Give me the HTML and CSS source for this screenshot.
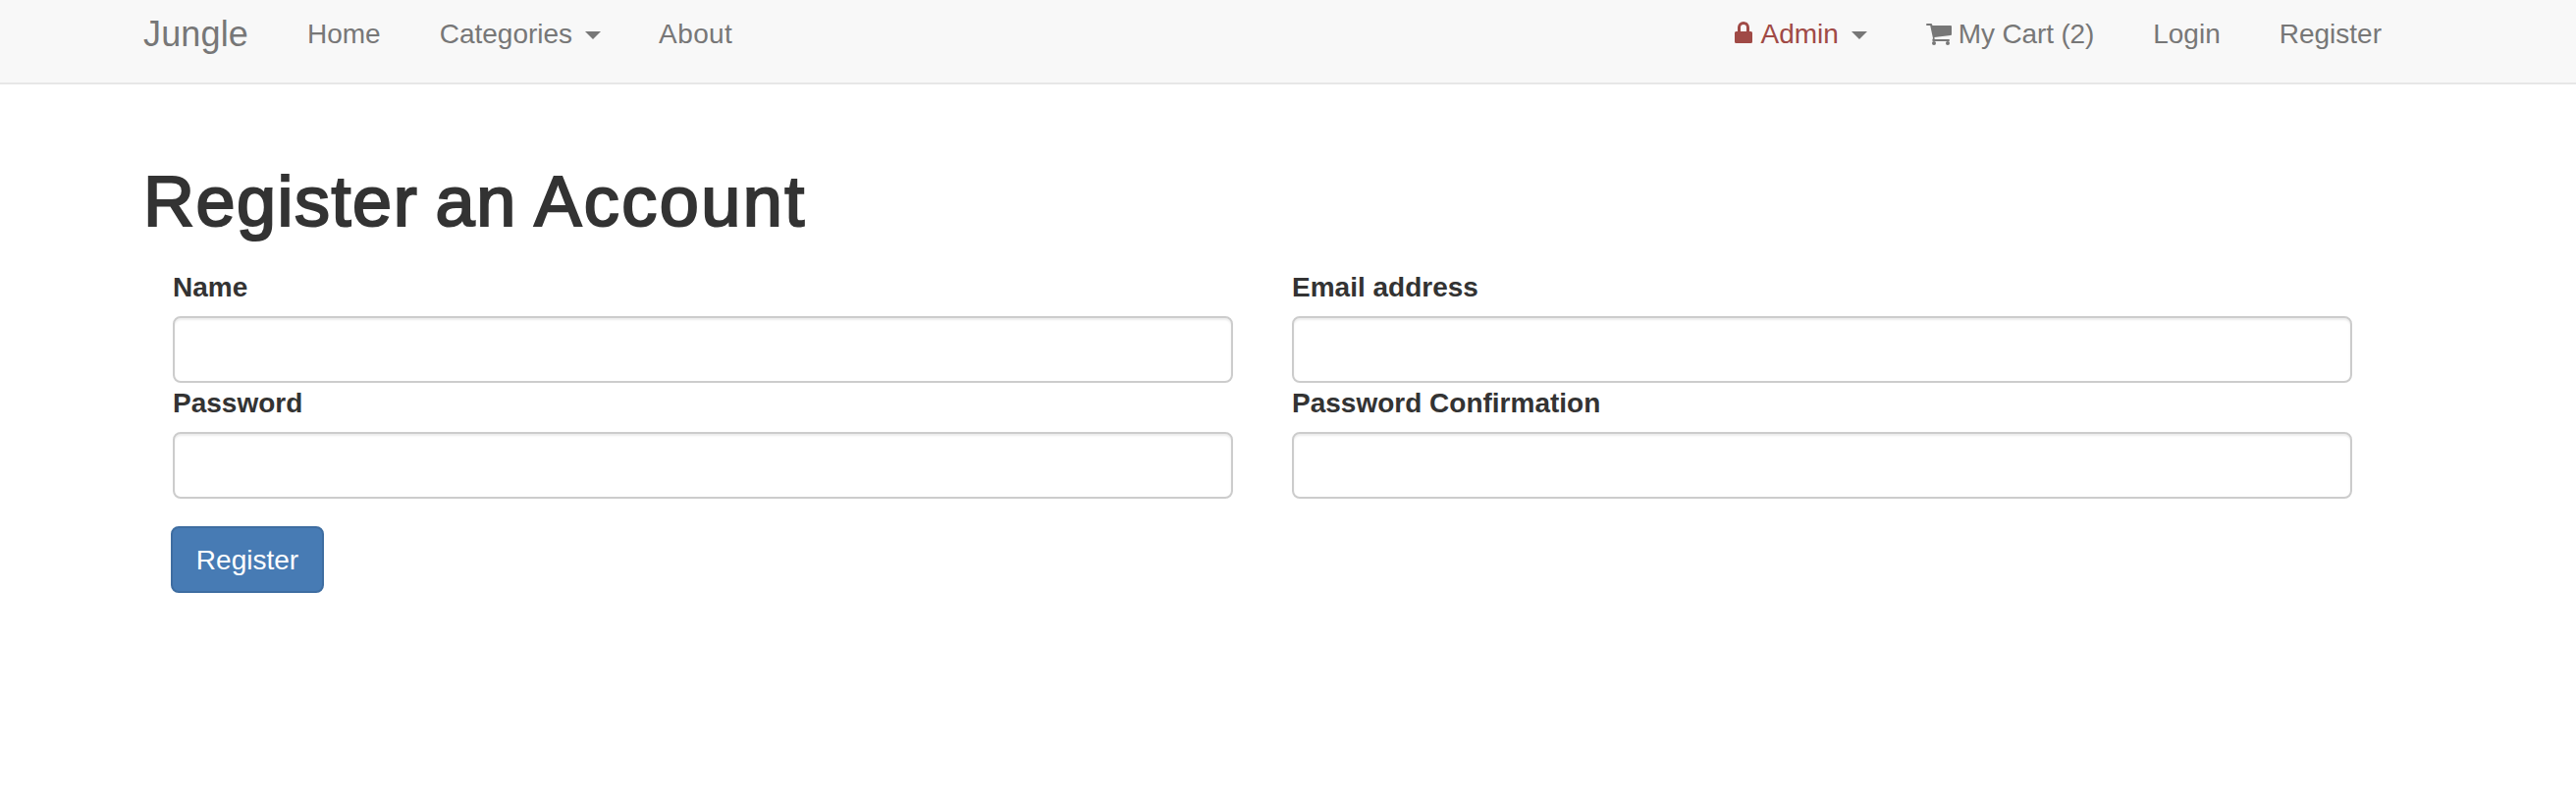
FILE: index.html
```html
<!DOCTYPE html>
<html lang="en">
<head>
<meta charset="utf-8">
<title>Jungle</title>
<link rel="stylesheet" href="styles.css">
</head>
<body>
<nav class="navbar">
  <div class="container navbar-inner">
    <a class="brand">Jungle</a>
    <a class="nav-link home">Home</a>
    <a class="nav-link">Categories<span class="caret"></span></a>
    <a class="nav-link about">About</a>
    <div class="nav-right">
      <a class="nav-link"><span class="admin"><svg class="lock" viewBox="0 0 18 22"><path fill="currentColor" fill-rule="evenodd" d="M3 10V6a6 6 0 0 1 12 0v4h1.500Q18 10 18 11.500v9Q18 22 16.500 22h-15Q0 22 0 20.500v-9Q0 10 1.500 10zM6 10h6V6a3 3 0 0 0-6 0z"/></svg>Admin</span><span class="caret"></span></a>
      <a class="nav-link cart-link"><svg class="cart" viewBox="0 0 26 22"><path fill="currentColor" d="M1 0h4Q6 0 6.200 1l.2 1H25q1 0 1 1v8q0 .9-1 1L8.400 14l.3 2H23q1 0 1 1t-1 1H7.500q-1.300 0-1.300-1l.8-2L4.200 2H1Q0 2 0 1t1-1z"/><circle cx="8" cy="20" r="2" fill="currentColor"/><circle cx="22" cy="20" r="2" fill="currentColor"/></svg>My Cart (2)</a>
      <a class="nav-link">Login</a>
      <a class="nav-link">Register</a>
    </div>
  </div>
</nav>
<main class="container">
  <h1 class="title">Register an <span class="title-wide">Account</span></h1>
  <form class="form">
    <div class="fields">
      <div class="field"><label class="label" for="name">Name</label><input class="input" id="name" type="text"></div>
      <div class="field"><label class="label" for="email">Email address</label><input class="input" id="email" type="email"></div>
      <div class="field"><label class="label" for="pw">Password</label><input class="input" id="pw" type="password"></div>
      <div class="field"><label class="label" for="pw2">Password Confirmation</label><input class="input" id="pw2" type="password"></div>
    </div>
    <button class="button" type="button">Register</button>
  </form>
</main>
</body>
</html>
```
FILE: styles.css
```css
* { box-sizing: border-box; }
body {
  margin: 0;
  background: #fff;
  color: #333;
  font: 28px/40px "Helvetica Neue", "Liberation Sans", Arial, sans-serif;
}
.container { width: 2280px; margin-left: 146px; }
.navbar { height: 86px; background: #f8f8f8; border-bottom: 2px solid #e7e7e7; color: #777; }
.navbar-inner { display: flex; padding-top: 15px; }
.brand { font-size: 36px; margin-right: 60px; letter-spacing: .15px; }
.nav-link { display: flex; margin-right: 60px; white-space: nowrap; }
.about { margin-left: -1px; letter-spacing: .4px; }
.nav-right { display: flex; margin-left: auto; }
.cart-link { letter-spacing: -.15px; }
.nav-right .nav-link:last-child { margin-right: 0; }
.caret {
  width: 16px;
  height: 8px;
  margin: 17px 0 0 13px;
  border: 8px solid transparent;
  border-top-color: #777;
  border-bottom: 0;
}
.admin { display: flex; color: #a04a46; }
.lock { width: 18px; height: 22px; margin: 7px 8px 0 0; }
.cart { width: 26px; height: 22px; margin: 9px 7px 0 0; }
.title {
  margin: 80px 0 27px;
  font-size: 72px;
  line-height: 79px;
  font-weight: 400;
  letter-spacing: 1.5px;
  word-spacing: -4px;
  -webkit-text-stroke: 2.2px #333;
}
.title-wide { letter-spacing: 2.5px; }
.form { padding: 0 30px; }
.fields { display: grid; grid-template-columns: 1fr 1fr; column-gap: 60px; }
.label { display: block; padding-top: 1px; margin-bottom: 9px; font-weight: 700; }
.input {
  display: block;
  width: 100%;
  height: 68px;
  padding: 12px 24px;
  border: 2px solid #ccc;
  border-radius: 8px;
  background: #fff;
  box-shadow: inset 0 2px 2px rgba(0, 0, 0, .075);
  font: inherit;
}
.button {
  display: block;
  width: 156px;
  height: 68px;
  margin: 28px 0 0 -2px;
  padding: 1px 0 0;
  border: 2px solid #3e6da1;
  border-radius: 8px;
  background: #477bb4;
  color: #fff;
  font: inherit;
}
```
